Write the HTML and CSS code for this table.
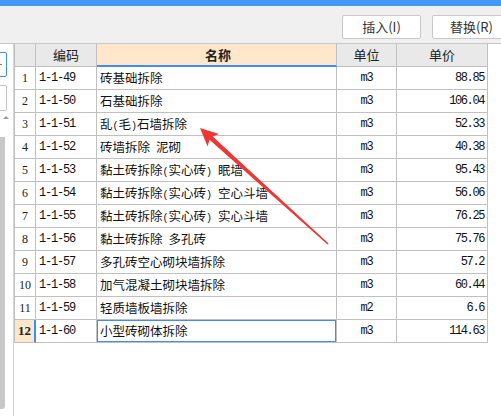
FILE: index.html
```html
<!DOCTYPE html>
<html lang="zh-CN">
<head>
<meta charset="utf-8">
<link rel="stylesheet" href="styles.css">
</head>
<body>
<div class="topbar"></div>
<div class="toolbar">
  <button class="btn">插入(I)</button>
  <button class="btn">替换(R)</button>
</div>
<div class="main">
  <div class="strip">
    <div class="lbox lbox-blue"><span class="dash"></span></div>
    <div class="lbox lbox-gray"></div>
    <div class="ltri"></div>
    <div class="lbar"></div>
  </div>
  <div class="grid">
    <div class="row head">
      <div class="c c0"></div>
      <div class="c c1">编码</div>
      <div class="c c2 active">名称</div>
      <div class="c c3">单位</div>
      <div class="c c4">单价</div>
    </div>
    <div class="row"><div class="c c0">1</div><div class="c c1">1-1-49</div><div class="c c2">砖基础拆除</div><div class="c c3">m3</div><div class="c c4">88.85</div></div>
    <div class="row"><div class="c c0">2</div><div class="c c1">1-1-50</div><div class="c c2">石基础拆除</div><div class="c c3">m3</div><div class="c c4">106.04</div></div>
    <div class="row"><div class="c c0">3</div><div class="c c1">1-1-51</div><div class="c c2">乱<span class="a">(</span>毛<span class="a">)</span>石墙拆除</div><div class="c c3">m3</div><div class="c c4">52.33</div></div>
    <div class="row"><div class="c c0">4</div><div class="c c1">1-1-52</div><div class="c c2">砖墙拆除<span class="a"> </span>泥砌</div><div class="c c3">m3</div><div class="c c4">40.38</div></div>
    <div class="row"><div class="c c0">5</div><div class="c c1">1-1-53</div><div class="c c2">黏土砖拆除<span class="a">(</span>实心砖<span class="a">) </span>眠墙</div><div class="c c3">m3</div><div class="c c4">95.43</div></div>
    <div class="row"><div class="c c0">6</div><div class="c c1">1-1-54</div><div class="c c2">黏土砖拆除<span class="a">(</span>实心砖<span class="a">) </span>空心斗墙</div><div class="c c3">m3</div><div class="c c4">56.06</div></div>
    <div class="row"><div class="c c0">7</div><div class="c c1">1-1-55</div><div class="c c2">黏土砖拆除<span class="a">(</span>实心砖<span class="a">) </span>实心斗墙</div><div class="c c3">m3</div><div class="c c4">76.25</div></div>
    <div class="row"><div class="c c0">8</div><div class="c c1">1-1-56</div><div class="c c2">黏土砖拆除<span class="a"> </span>多孔砖</div><div class="c c3">m3</div><div class="c c4">75.76</div></div>
    <div class="row"><div class="c c0">9</div><div class="c c1">1-1-57</div><div class="c c2">多孔砖空心砌块墙拆除</div><div class="c c3">m3</div><div class="c c4">57.2</div></div>
    <div class="row"><div class="c c0">10</div><div class="c c1">1-1-58</div><div class="c c2">加气混凝土砌块墙拆除</div><div class="c c3">m3</div><div class="c c4">60.44</div></div>
    <div class="row"><div class="c c0">11</div><div class="c c1">1-1-59</div><div class="c c2">轻质墙板墙拆除</div><div class="c c3">m2</div><div class="c c4">6.6</div></div>
    <div class="row current"><div class="c c0">12</div><div class="c c1">1-1-60</div><div class="c c2 selected">小型砖砌体拆除</div><div class="c c3">m3</div><div class="c c4">114.63</div></div>
  </div>
</div>
<svg class="arrow" width="501" height="417" viewBox="0 0 501 417">
  <polygon points="200,128 219,134 212.8,136.6 328.6,243.5 327.5,244.6 209.5,139.8 207.6,146.4" fill="#ee3636"/>
</svg>
</body>
</html>
```
FILE: styles.css
```css
html, body {
  margin: 0;
  padding: 0;
  width: 501px;
  height: 417px;
  overflow: hidden;
  background: #ffffff;
  font-family: "Noto Sans CJK SC", "Liberation Sans", sans-serif;
  position: relative;
}

.topbar {
  height: 6px;
  background: #4397f5;
}

.toolbar {
  height: 38px;
  background: #f0f0f0;
  border-bottom: 1px solid #c8c8c8;
  display: flex;
  align-items: flex-start;
  gap: 11px;
  padding: 9px 0 0 342px;
  box-sizing: border-box;
  overflow: hidden;
}

.btn {
  flex: 0 0 79px;
  width: 79px;
  height: 24px;
  background: #ffffff;
  border: 1px solid #c9c9c9;
  border-radius: 2px;
  font-family: "Noto Sans CJK SC", sans-serif;
  font-size: 13px;
  color: #333333;
  padding: 0;
  line-height: 22px;
}

.main {
  display: flex;
  height: 372px;
}

.strip {
  width: 13px;
  border-right: 1px solid #d6d6d6;
  background: #ffffff;
  overflow: hidden;
  display: flex;
  flex-direction: column;
  flex: 0 0 auto;
}

.lbox {
  width: 14px;
  margin-left: -7px;
  border-radius: 2px;
  box-sizing: border-box;
  position: relative;
}

.lbox-blue {
  margin-top: 8px;
  height: 25px;
  border: 1px solid #3f8ff0;
}

.dash {
  position: absolute;
  left: 6px;
  top: 11px;
  width: 2px;
  height: 1px;
  background: #888;
}

.lbox-gray {
  margin-top: 8px;
  height: 26px;
  border: 1px solid #c4c4c4;
}

.ltri {
  margin: 5px 0 0 3px;
  width: 0;
  height: 0;
  border-left: 3px solid transparent;
  border-right: 3px solid transparent;
  border-bottom: 3px solid #9a9a9a;
}

.lbar {
  margin-top: 18px;
  width: 5px;
  height: 272px;
  background: #c8c8c8;
  border-radius: 0 0 3px 0;
}

.grid {
  display: flex;
  flex-direction: column;
  align-self: flex-start;
  border-left: 1px solid #c0c0c0;
}

.row {
  display: grid;
  grid-template-columns: 21px 61px 240px 60px 91px;
  height: 23px;
}

.c {
  box-sizing: border-box;
  border-right: 1px solid #c0c0c0;
  border-bottom: 1px solid #c0c0c0;
  height: 23px;
  line-height: 22px;
  font-size: 12px;
  color: #111111;
  white-space: pre;
  overflow: hidden;
  position: relative;
}

.head .c {
  background: #e9e9e9;
  text-align: center;
  font-size: 13px;
  color: #222222;
}

.head .c.active {
  background: #fee7ca;
  border-bottom: 2px solid #3f8ff0;
  font-weight: bold;
  line-height: 21px;
}

.c0 {
  text-align: center;
  font-family: "Liberation Serif", serif;
  font-size: 12px;
  color: #222222;
}

.c1 {
  padding-left: 3px;
  font-family: "Liberation Mono", monospace;
  font-size: 12px;
  letter-spacing: -1.2px;
}

.c2 {
  padding-left: 3px;
  font-size: 12.5px;
}

.a {
  font-family: "Liberation Mono", monospace;
  font-size: 10px;
}

.c3 {
  text-align: center;
  font-family: "Liberation Mono", monospace;
  font-size: 12px;
  letter-spacing: -1.2px;
}

.c4 {
  text-align: right;
  padding-right: 3px;
  font-family: "Liberation Mono", monospace;
  font-size: 12px;
  letter-spacing: -1.4px;
}

.head .c1, .head .c3, .head .c4 {
  font-family: "Noto Sans CJK SC", sans-serif;
  font-size: 13px;
  letter-spacing: 0;
  padding: 0;
}

.current .c0 {
  background: #fee7ca;
  font-weight: bold;
  font-size: 13px;
  border-right: 2px solid #3f8ff0;
}

.selected::after {
  content: "";
  position: absolute;
  left: -1px;
  top: -1px;
  right: -1px;
  bottom: -1px;
  border: 2px solid #3f8ff0;
}

.arrow {
  position: absolute;
  left: 0;
  top: 0;
  pointer-events: none;
}
```
